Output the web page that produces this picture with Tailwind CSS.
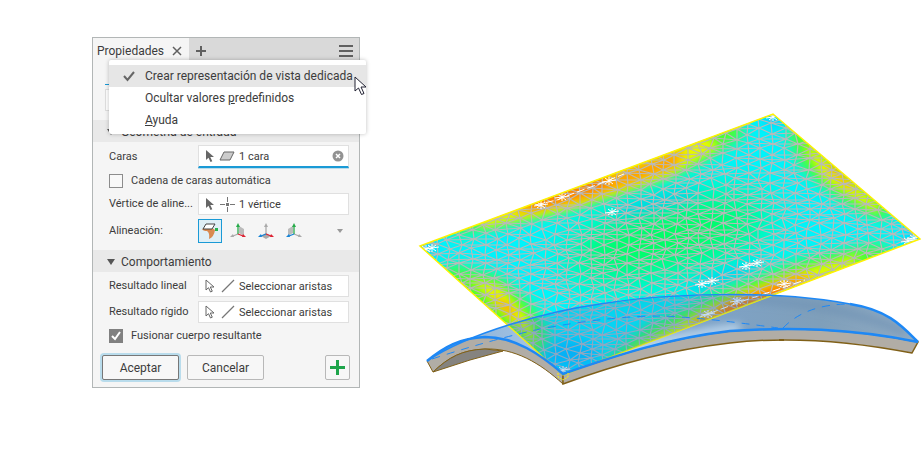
<!DOCTYPE html>
<html lang="es">
<head>
<meta charset="UTF-8"/>
<meta name="viewport" content="width=device-width,initial-scale=1.0"/>
<title>Propiedades</title>
<script src="https://cdn.jsdelivr.net/npm/@tailwindcss/browser@4"></script>
</head>
<body class="bg-white text-[#3c3c3c] font-[Roboto,'Noto_Sans',sans-serif] text-[11px] leading-4">

<!-- shared icons -->
<svg class="hidden">
  <symbol id="arrow" viewBox="0 0 10 14"><path d="M1 1v10l2.500-2.300 2 4.300 1.800-.8-2-4.200H9z"/></symbol>
  <symbol id="line" viewBox="0 0 14 14"><path d="M1 13 13 1" stroke="#777" stroke-width="1.300"/></symbol>
</svg>

<div class="flex items-start min-h-screen overflow-hidden">

<!-- PANEL -->
<section class="relative shrink-0 w-[268px] ml-[92px] mt-[37px] border border-[#b2b6b6] bg-[#f5f5f5]">
  <header class="flex h-[22px] bg-[#d9d9d9] text-xs">
    <div class="flex items-center justify-between w-24 px-1 pt-1 bg-[#f5f5f5]">
      <span>Propiedades</span>
      <button aria-label="Cerrar" class="mr-0.5"><svg class="w-3 h-3" viewBox="0 0 12 12" stroke="#606060" stroke-width="1.500"><path d="M2 2l8 8M10 2l-8 8"/></svg></button>
    </div>
    <button class="ml-1.5 pt-1" aria-label="Nueva"><svg class="w-3 h-3" viewBox="0 0 12 12" stroke="#606060" stroke-width="2"><path d="M6 1v10M1 6h10"/></svg></button>
    <button class="ml-auto mr-1.5 pt-1" aria-label="Menú"><svg class="w-3.5 h-3.5" viewBox="0 0 14 14" stroke="#606060" stroke-width="2"><path d="M0 2h14M0 7h14M0 12h14"/></svg></button>
  </header>

  <div class="flex flex-col gap-1 h-15 px-3 pt-1">
    <div class="h-[21px] w-24 border-b border-[#1a9ad6]"></div>
    <input aria-label="Valores predefinidos" class="h-[22px] w-full border border-[#dedede] bg-white">
  </div>

  <button class="flex items-center gap-1.5 w-full h-[22px] pl-3.5 pt-0.5 bg-[#e9e9e9] text-xs">
    <svg class="w-2 h-2" viewBox="0 0 8 8" fill="#555"><path d="M0 1h8L4 7z"/></svg>Geometría de entrada
  </button>

  <div class="flex flex-col pl-4 pr-2.5 pt-[3px] pb-[7px]">
    <div class="flex items-center">
      <label for="faces" class="shrink-0 w-[89px]">Caras</label>
      <div class="flex flex-1 min-w-0 items-center h-[23px] pl-1.5 pr-1 border border-[#e0e0e0] border-b-2 border-b-[#1a9ad6] bg-white shadow-[0_1px_0_#bcdcea]">
        <svg class="w-2.5 h-3.5" fill="#666"><use href="#arrow"/></svg>
        <svg class="w-4 h-3 ml-1" viewBox="0 0 16 12" fill="#ccc" stroke="#666"><path d="M5 2h10l-4 8H1z"/></svg>
        <input id="faces" value="1 cara" class="flex-1 min-w-0 ml-1 pt-0.5 outline-none">
        <button aria-label="Borrar"><svg class="w-3 h-3" viewBox="0 0 12 12"><circle cx="6" cy="6" r="5.500" fill="#929292"/><path d="m4 4 4 4m0-4-4 4" stroke="#fff" stroke-width="1.500"/></svg></button>
      </div>
    </div>
    <label class="flex items-center gap-2 h-[25px]">
      <input type="checkbox" class="appearance-none w-3.5 h-3.5 border border-[#8c8c8c] bg-[#f8f8f8]">Cadena de caras automática
    </label>
    <div class="flex items-center">
      <label for="vertex" class="shrink-0 w-[89px]">Vértice de aline...</label>
      <div class="flex flex-1 min-w-0 items-center h-[22px] pl-1.5 border border-[#e0e0e0] bg-white">
        <svg class="w-2.5 h-3.5" fill="#666"><use href="#arrow"/></svg>
        <svg class="w-4 h-4 ml-1" viewBox="0 0 16 16" stroke="#777"><path d="M8.500 1v5M8.500 11v5M1 8.500h5M11 8.500h5"/><path d="M7 7h3v3H7z" fill="#777" stroke="none"/></svg>
        <input id="vertex" value="1 vértice" class="flex-1 min-w-0 ml-1 pt-0.5 outline-none">
      </div>
    </div>
    <div class="flex items-center mt-1">
      <span class="shrink-0 w-[89px]">Alineación:</span>
      <div class="flex flex-1 items-center gap-1">
        <button aria-label="Cara" class="w-6 h-6 border border-[#1a9ad6] bg-[#dfeff6]">
          <svg viewBox="0 0 22 22"><path d="M3 9q1 2 5 2 3 2 2 8 5-2 6-9l-3-2z" fill="#d98a50"/><path d="M7 4h9l-3 5H4z" fill="#fff" stroke="#444"/><path d="M16 8h3v3h-3z" fill="#28b351"/></svg>
        </button>
        <button aria-label="Plano YZ" class="w-6 h-6">
          <svg viewBox="0 0 24 24"><path d="M13 7l5 3v7l-5-3z" fill="#bbb"/><path d="M12 15l-5 2" stroke="#aaa" stroke-width="1.300"/><path d="M4 18l3-3 1 3z" fill="#aaa"/><path d="M12 15V7" stroke="#27ab4a" stroke-width="1.300"/><path d="M12 4l2 4h-4z" fill="#27ab4a"/><path d="M12 15l5 2" stroke="#d23" stroke-width="1.300"/><path d="M20 18l-3-3-1 3z" fill="#d23"/></svg>
        </button>
        <button aria-label="Plano XY" class="w-6 h-6">
          <svg viewBox="0 0 24 24"><path d="M12 14l5 3-5 3-5-3z" fill="#aaa"/><path d="M12 15V7" stroke="#aaa" stroke-width="1.300"/><path d="M12 4l2 4h-4z" fill="#aaa"/><path d="M12 15l-5 2" stroke="#1683d6" stroke-width="1.300"/><path d="M4 18l3-3 1 3z" fill="#1683d6"/><path d="M12 15l5 2" stroke="#d23" stroke-width="1.300"/><path d="M20 18l-3-3-1 3z" fill="#d23"/></svg>
        </button>
        <button aria-label="Plano XZ" class="w-6 h-6">
          <svg viewBox="0 0 24 24"><path d="M11 7l-5 3v7l5-3z" fill="#bbb"/><path d="M12 15l5 2" stroke="#aaa" stroke-width="1.300"/><path d="M20 18l-3-3-1 3z" fill="#aaa"/><path d="M12 15V7" stroke="#27ab4a" stroke-width="1.300"/><path d="M12 4l2 4h-4z" fill="#27ab4a"/><path d="M12 15l-5 2" stroke="#1683d6" stroke-width="1.300"/><path d="M4 18l3-3 1 3z" fill="#1683d6"/></svg>
        </button>
        <button aria-label="Más" class="ml-auto mr-1.5"><svg class="w-1.5 h-1.5" viewBox="0 0 6 6" fill="#999"><path d="M0 1h6L3 5z"/></svg></button>
      </div>
    </div>
  </div>

  <button class="flex items-center gap-1.5 w-full h-[22px] pl-3.5 pt-0.5 bg-[#e9e9e9] text-xs">
    <svg class="w-2 h-2" viewBox="0 0 8 8" fill="#555"><path d="M0 1h8L4 7z"/></svg>Comportamiento
  </button>

  <div class="flex flex-col gap-1 pl-4 pr-2.5 pt-[3px]">
    <div class="flex items-center">
      <label for="linear" class="shrink-0 w-[89px]">Resultado lineal</label>
      <div class="flex flex-1 min-w-0 items-center h-[22px] pl-1.5 border border-[#e0e0e0] bg-white">
        <svg class="w-2.5 h-3.5" fill="#fff" stroke="#666"><use href="#arrow"/></svg>
        <svg class="w-3.5 h-3.5 ml-1.5"><use href="#line"/></svg>
        <input id="linear" value="Seleccionar aristas" class="flex-1 min-w-0 ml-1 pt-0.5 outline-none">
      </div>
    </div>
    <div class="flex items-center">
      <label for="rigid" class="shrink-0 w-[89px]">Resultado rígido</label>
      <div class="flex flex-1 min-w-0 items-center h-[22px] pl-1.5 border border-[#e0e0e0] bg-white">
        <svg class="w-2.5 h-3.5" fill="#fff" stroke="#666"><use href="#arrow"/></svg>
        <svg class="w-3.5 h-3.5 ml-1.5"><use href="#line"/></svg>
        <input id="rigid" value="Seleccionar aristas" class="flex-1 min-w-0 ml-1 pt-0.5 outline-none">
      </div>
    </div>
    <label class="flex items-center gap-2 h-[18px]">
      <span class="relative w-3.5 h-3.5">
        <input type="checkbox" checked class="block appearance-none w-3.5 h-3.5 bg-[#808080]">
        <svg class="absolute inset-0 pointer-events-none" viewBox="0 0 14 14" fill="none" stroke="#fff" stroke-width="2"><path d="m3 7 3 3 5-7"/></svg>
      </span>Fusionar cuerpo resultante
    </label>
  </div>

  <footer class="flex gap-2 px-[9px] pt-[10px] pb-[7px] text-xs">
    <button class="w-[77px] h-[25px] rounded-xs border border-[#777] bg-[#f7f7f7] shadow-[0_0_0_2px_#b9dcec]">Aceptar</button>
    <button class="w-[77px] h-[25px] rounded-xs border border-[#b8b8b8] bg-[#f7f7f7]">Cancelar</button>
    <button aria-label="Añadir" class="ml-auto w-[25px] h-[25px] rounded-xs border border-[#b8b8b8] bg-[#f7f7f7]">
      <svg viewBox="0 0 23 23" stroke="#1ea54b" stroke-width="3"><path d="M11.500 4v15M4 11.500h15"/></svg>
    </button>
  </footer>

  <!-- popup menu -->
  <div role="menu" class="absolute left-4 top-[22px] w-[257px] pt-[5px] pb-[3px] rounded-xs bg-white text-xs shadow-[0_0_4px_rgba(0,0,0,0.25)]">
    <button role="menuitemcheckbox" aria-checked="true" class="flex items-center w-full h-[22px] pl-3.5 bg-[#e6e6e6] whitespace-nowrap">
      <svg class="w-3 h-3 mr-2.5" viewBox="0 0 12 12" fill="none" stroke="#666" stroke-width="2"><path d="m1 6 3.500 4L11 2"/></svg>Crear representación de vista dedicada
    </button>
    <button role="menuitem" class="block w-full h-[22px] pl-9 text-left">Ocultar valores <u>p</u>redefinidos</button>
    <button role="menuitem" class="block w-full h-[22px] pl-9 text-left"><u>A</u>yuda</button>
    <svg class="absolute left-[245px] top-4 w-3.5 h-5" viewBox="0 0 14 20" fill="#fff" stroke="#223"><path d="M1 1v14l3.500-3 3 6.500 2.500-1-3-6.500h5z"/></svg>
  </div>
</section>

<!-- VIEWPORT -->
<svg class="flex-1 min-w-0" viewBox="360 0 561 449" fill="none">
  <defs>
    <clipPath id="sheet"><path d="M420 246 773 114 920 239 563 375z"/></clipPath>
    <clipPath id="shell"><path d="M427 361C470 332 550 311 600 304 660 294 770 289 850 304 888 310 902 326 918 342 850 328 790 327 730 331 670 338 620 354 563 374 540 354 515 337 485 337 460 338 444 347 427 361z"/></clipPath>
    <filter id="b4" x="-50%" y="-50%" width="200%" height="200%"><feGaussianBlur stdDeviation="4"/></filter>
    <filter id="b8" x="-50%" y="-50%" width="200%" height="200%"><feGaussianBlur stdDeviation="7"/></filter>
    <filter id="b20" x="-50%" y="-50%" width="200%" height="200%"><feGaussianBlur stdDeviation="20"/></filter>
    <linearGradient id="top" x1="0" x2="1"><stop offset="0" stop-color="#82a9d2"/><stop offset=".35" stop-color="#b3d1ec"/><stop offset=".55" stop-color="#7ea3c8"/><stop offset=".8" stop-color="#7f9fba"/><stop offset="1" stop-color="#91abc3"/></linearGradient>
  </defs>

  <!-- shell, thickness and top face -->
  <path d="M427 361C444 347 460 338 485 337 515 337 540 354 563 374V384C540 363 515 348 485 349 462 350 449 357 433 372z" fill="#b1ada6" stroke="#806018"/>
  <path d="M433 372C449 357 462 350 485 349L503 351 470 360z" fill="#85837f" stroke="#806018"/>
  <path d="M563 374C620 354 670 338 730 331 790 327 850 328 918 342L912 353C850 341 790 336 730 343 670 350 620 363 563 384z" fill="#b1ada6" stroke="#806018" stroke-width="1.500"/>
  <path d="M779 340h5" stroke="#806018" stroke-width="2"/>
  <g clip-path="url(#shell)">
    <path d="M420 280h501v100H420z" fill="url(#top)"/>
    <path d="M690 299Q820 295 905 332" stroke="#6e91b4" stroke-width="5" filter="url(#b4)"/>
    <path d="M580 367Q680 334 740 328" stroke="#c3dcf2" stroke-width="8" filter="url(#b4)"/>
  </g>

  <!-- stress map -->
  <g clip-path="url(#sheet)">
    <path d="M410 100h511v280H410z" fill="#00f4fc"/>
    <ellipse cx="668" cy="238" rx="105" ry="34" fill="#00ff58" filter="url(#b20)" transform="rotate(-14 668 238)"/>
    <g fill="#00c4ff" filter="url(#b8)"><ellipse cx="655" cy="203" rx="48" ry="5" transform="rotate(-15 655 203)"/><ellipse cx="725" cy="278" rx="42" ry="5" transform="rotate(-20 725 278)"/><circle cx="773" cy="116" r="10"/><circle cx="420" cy="246" r="12"/><circle cx="918" cy="240" r="11"/><ellipse cx="570" cy="354" rx="30" ry="14"/></g>
    <g fill="#50ff28" filter="url(#b8)"><path d="M455 236 560 211 690 168 745 136 735 114 450 222zM789 137 802 168 845 204 885 222 895 200 795 115zM448 264 500 277 531 304 550 336 535 360 440 280zM605 362 650 325 720 291 800 260 880 243 895 260 610 375z"/></g>
    <g fill="#e8f800" filter="url(#b4)"><path d="M480 229 570 209 670 176 720 147 705 134 480 216zM806 150 823 178 856 200 876 213 880 206 806 142zM468 278 500 286 528 318 538 348zM632 350 710 306 800 271 862 253 850 268 630 360z"/></g>
    <g fill="#ffa000" filter="url(#b4)"><path d="M515 214 585 200 675 168 685 149 515 208zM828 168 847 186 858 190 830 162zM489 296 510 304 518 323zM690 323 735 297 800 274 814 278 700 330z"/></g>
    <g stroke="#ff4600" stroke-width="5" filter="url(#b4)"><path d="M530 206 606 180M720 313 796 286"/></g>
    <path id="mesh" stroke="#b9b9b9" stroke-width="1.200"/>
    <path id="flares" stroke="#fff"/>
    <path d="M535 205l22-5 20-8 22-8 25-10M700 317l40-15 30-10 35-12" stroke="#fff" stroke-dasharray="8 3"/>
  </g>
  <path d="M420 246 773 114 920 239 563 375z" stroke="#fff200" stroke-width="1.500"/>

  <!-- highlighted shell over the map -->
  <g clip-path="url(#shell)"><path d="M503 320 563 375 921 239V220H503z" fill="#1473dc" fill-opacity=".25"/></g>
  <g stroke="#1e88f5">
    <path d="M427 361C470 332 550 311 600 304 660 294 770 289 850 304" stroke-width="1.500"/>
    <path d="M850 304C888 310 902 326 918 342M427 361C444 347 460 338 485 337 515 337 540 354 563 374 620 354 670 338 730 331 790 327 850 328 918 342" stroke-width="2.500"/>
    <path d="M432 359Q490 340 540 329 610 316 660 316 700 317 778 328M783 328Q806 304 850 304" stroke-dasharray="8 7"/>
  </g>
  <path d="M558 373v4l5 3 5-3v-4" stroke="#fff200" stroke-dasharray="2 1"/>
</svg>
</div>

<script>
/* triangle mesh: columns of nodes with a small fixed jitter */
const rnd=(i,j)=>{ const s=Math.sin(i*127.1+j*311.7)*43758.5; return s-Math.floor(s); };
const node=(i,j)=>[
  Math.round(412+i*12+(rnd(i,j)-.5)*5),
  Math.round(104+j*10+(i%2?5:0)+(rnd(j+50,i)-.5)*3)
];
let d='';
const seg=(a,b)=>{ d+=`M${a[0]} ${a[1]}L${b[0]} ${b[1]}`; };
for(let i=0;i<43;i++) for(let j=0;j<29;j++){
  const p=node(i,j), k=i%2;
  seg(p,node(i,j+1));
  seg(p,node(i+1,j+k));
  seg(p,node(i+1,j+k-1));
  if(rnd(i+9,j+4)>.4) seg(p,node(i+2,j));
}
document.getElementById('mesh').setAttribute('d',d);

/* bright nodes */
const flares=[[541,205],[562,197],[609,181],[612,212],[773,117],[426,249],[432,248],
  [702,284],[712,281],[746,266],[757,263],[784,284],[737,301],[708,314],[908,241],[914,238],[563,370]];
document.getElementById('flares').setAttribute('d',flares.map(([x,y])=>
  `M${x-7} ${y+1}L${x+7} ${y-1}M${x-4} ${y-3}L${x+4} ${y+3}M${x-4} ${y+3}L${x+4} ${y-3}M${x} ${y-4}V${y+4}`).join(''));
</script>
</body>
</html>
